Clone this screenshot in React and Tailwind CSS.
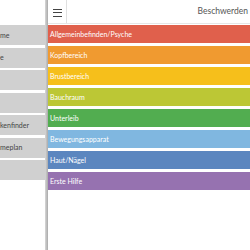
export default function App() {
  const side = [
    { t: "me" },
    { t: "e" },
    { t: "" },
    { t: "" },
    { t: "kenfinder" },
    { t: "meplan" },
    { t: "" },
  ];
  const rows = [
    { t: "Allgemeinbefinden/Psyche", c: "bg-[#e0604c]" },
    { t: "Kopfbereich", c: "bg-[#f09a30]" },
    { t: "Brustbereich", c: "bg-[#f6bf1b]" },
    { t: "Bauchraum", c: "bg-[#bcc735]" },
    { t: "Unterleib", c: "bg-[#52ad50]" },
    { t: "Bewegungsapparat", c: "bg-[#80b7e0]" },
    { t: "Haut/Nägel", c: "bg-[#5b86bf]" },
    { t: "Erste Hilfe", c: "bg-[#9672b0]" },
  ];
  return (
    <div
      className="w-[250px] h-[250px] overflow-hidden flex bg-white"
      style={{ fontFamily: 'Lato, "Open Sans", sans-serif' }}
    >
      <div className="w-[45px] shrink-0 flex flex-col gap-[2.5px] pt-[25px] bg-white">
        {side.map((s, i) => (
          <div
            key={i}
            className="h-[20px] bg-[#d0d0d0] flex items-center text-[7px] text-[#444] whitespace-nowrap overflow-hidden"
          >
            {s.t}
          </div>
        ))}
      </div>
      <div className="w-[3px] shrink-0 bg-gradient-to-r from-[#d8d8d8] to-[#a9a9a9]" />
      <div className="flex-1 flex flex-col">
        <div className="h-[24px] border-b border-[#e6e6e6] flex items-center justify-between">
          <div className="w-[19px] h-full border-r border-[#e0e0e0] flex flex-col items-center justify-center gap-[2.5px] pt-[2px]">
            <div className="w-[9px] h-[1px] bg-[#444]" />
            <div className="w-[9px] h-[1px] bg-[#444]" />
            <div className="w-[9px] h-[1px] bg-[#444]" />
          </div>
          <div className="text-[8.5px] text-[#555] pr-[2px] pb-[1px]">Beschwerden</div>
        </div>
        <div className="flex flex-col gap-[3px] mt-[1px]">
          {rows.map((r, i) => (
            <div
              key={i}
              className={`h-[18px] ${r.c} flex items-center pl-[2px] text-[7px] text-white whitespace-nowrap`}
            >
              {r.t}
            </div>
          ))}
        </div>
      </div>
    </div>
  );
}
